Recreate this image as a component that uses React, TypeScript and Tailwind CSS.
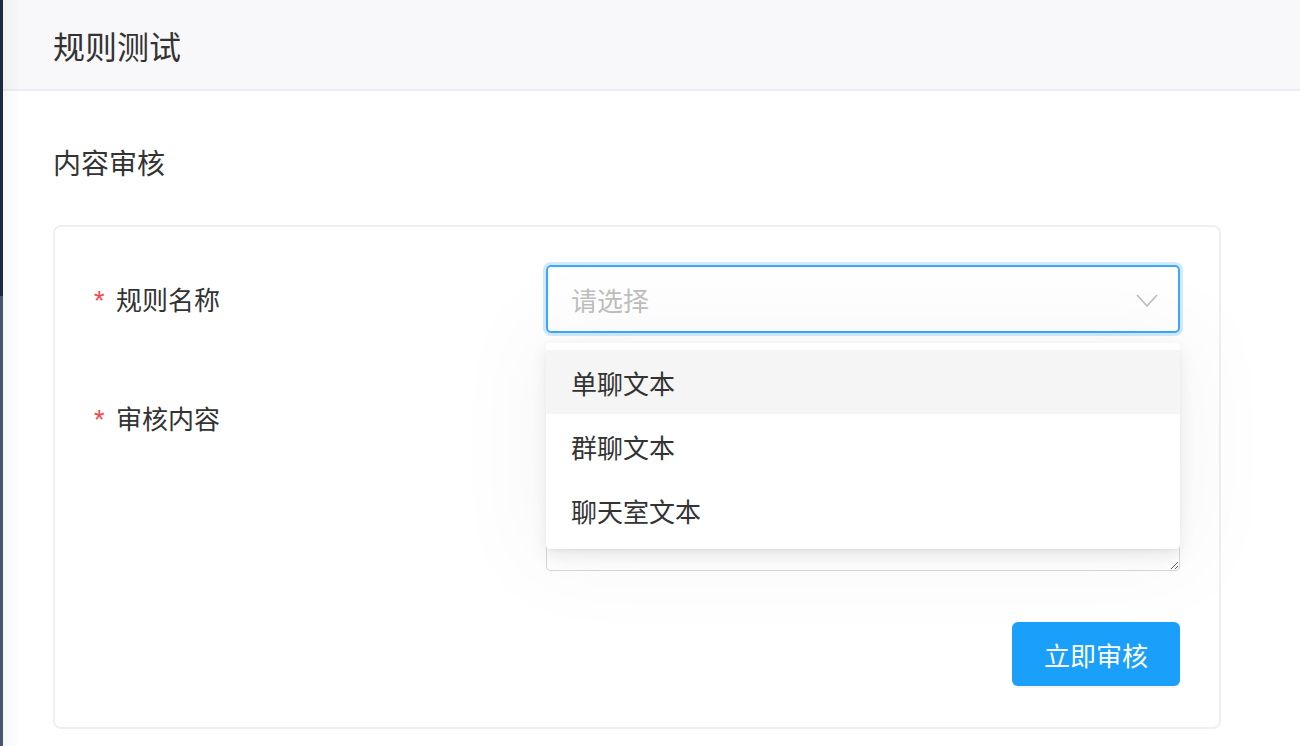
const options = ['单聊文本', '群聊文本', '聊天室文本'];

const Label = ({ text }: { text: string }) => (
  <div className="flex w-[452px] items-center text-[26px] leading-[40px]">
    <span className="w-[22px] pt-[4px] font-['Liberation_Sans',sans-serif] text-[27px] leading-[40px] text-[#f5484d]">*</span>
    <span>{text}</span>
  </div>
);

export default function App() {
  return (
    <div className="flex h-[746px] w-[1300px] overflow-hidden bg-white font-['Noto_Sans_CJK_SC',sans-serif] text-[#333]">
      <div className="flex w-[3px] flex-col">
        <div className="h-[296px] bg-[#1c2a3c]" />
        <div className="flex-1 bg-[#4a5466]" />
      </div>

      <div className="relative flex-1">
        <div className="pointer-events-none absolute left-0 top-0 z-20 h-full w-[18px] bg-gradient-to-r from-black/[0.035] to-transparent" />

        <header className="flex h-[91px] items-center border-b-2 border-[#ebedf2] bg-[#f8f8fa] pl-[50px] text-[32px]">
          规则测试
        </header>

        <div className="pl-[50px] pr-[79px]">
          <h2 className="mt-[51px] mb-[43px] text-[28px] leading-[40px]">内容审核</h2>

          <div className="rounded-[8px] border-2 border-[#efefef] px-[39px] pt-[38px] pb-[41px]">
            <div className="flex">
              <Label text="规则名称" />
              <div className="relative flex h-[68px] w-[634px] items-center justify-between rounded-[5px] border-2 border-[#3aa9fa] pl-[23px] pr-[20px] ring-[3px] ring-[#d3eafd]">
                <span className="text-[26px] text-[#bfbfbf]">请选择</span>
                <svg width="22" height="13" viewBox="0 0 22 13" fill="none" className="mt-[2px]">
                  <polyline points="1,1 11,12 21,1" stroke="#bdbdbd" strokeWidth="1.6" />
                </svg>

                <div className="absolute left-[-2px] right-[-2px] top-[76px] z-10 rounded-[4px] bg-white py-[7px] shadow-[0_3px_6px_-4px_rgba(0,0,0,0.12),0_6px_16px_0_rgba(0,0,0,0.08),0_0_90px_20px_rgba(0,0,0,0.035)]">
                  {options.map((o, i) => (
                    <div
                      key={o}
                      className={`flex h-[64px] items-center pl-[25px] text-[26px] ${i === 0 ? 'bg-[#f5f5f5]' : ''}`}
                    >
                      {o}
                    </div>
                  ))}
                </div>
              </div>
            </div>

            <div className="mt-[49px] flex items-start">
              <div className="pt-[14px]">
                <Label text="审核内容" />
              </div>
              <textarea className="h-[189px] w-[634px] rounded-[4px] border border-[#d9d9d9] outline-none" />
            </div>

            <div className="mt-[51px] flex justify-end">
              <button className="h-[64px] w-[168px] rounded-[6px] bg-[#1a9ffb] text-[26px] text-white shadow-[0_2px_0_rgba(0,0,0,0.045)]">
                立即审核
              </button>
            </div>
          </div>
        </div>
      </div>
    </div>
  );
}
